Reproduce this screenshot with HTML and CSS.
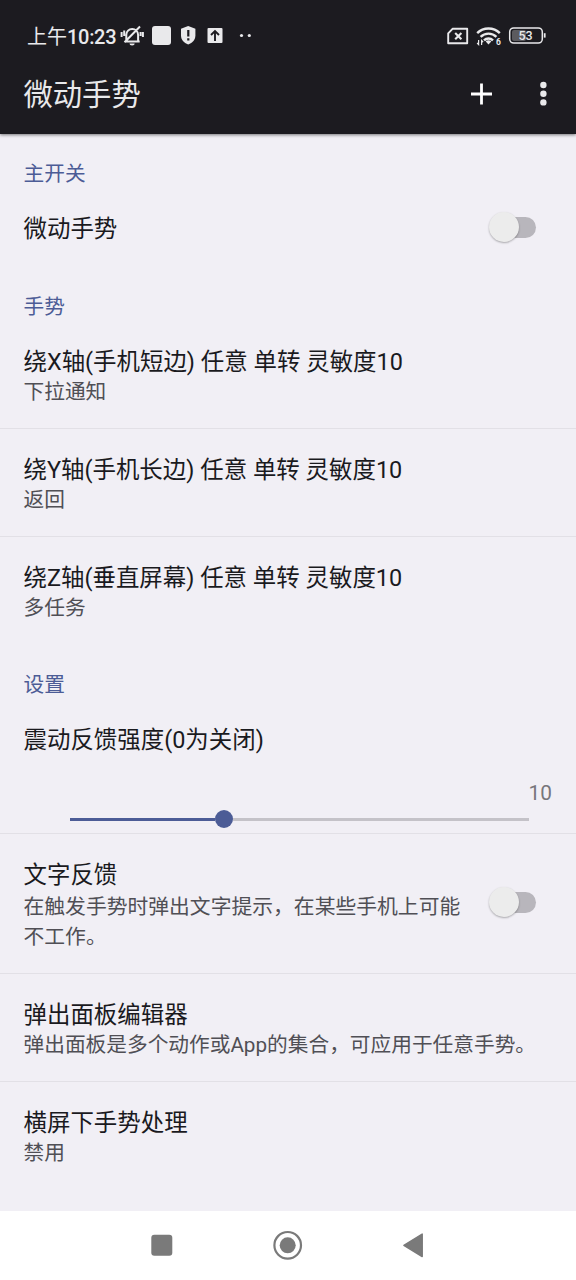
FILE: index.html
```html
<!DOCTYPE html>
<html lang="zh-CN">
<head>
<meta charset="utf-8">
<title>微动手势</title>
<link rel="stylesheet" href="styles.css">
</head>
<body>
<header class="top">
  <div class="status">
    <span class="clock">上午<span class="digits">10:23</span></span>
    <svg class="status-left" width="136" height="24" viewBox="120 24 136 24" fill="#e9e9eb">
      <g fill="none" stroke="#e9e9eb" stroke-width="2">
        <path d="M124.5 41.6h15.2M126.3 41v-6.200a5.900 5.900 0 0 1 5.900-5.900a5.900 5.900 0 0 1 5.900 5.900v6.200M124.500 42.200L140 26.500M121.600 32v5M142.900 32v5M124.200 30.500v5.500M140.600 32v4"/>
      </g>
      <path d="M129.500 43.500h5.200a2.600 2 0 0 1-5.200 0z"/>
      <rect x="152" y="26" width="19" height="19" rx="3"/>
      <path d="M188.200 26l7.200 2.800v6.500c0 4.600-2.800 7.600-7.200 9.200c-4.400-1.600-7.200-4.600-7.200-9.200v-6.500z"/>
      <path d="M187.200 30h2.200v6.500h-2.200zM187.200 38.200h2.200v2.300h-2.200z" fill="#1c1b20"/>
      <rect x="207.500" y="28" width="15" height="15" rx="1"/>
      <path d="M215 41v-9.500M211 35l4-4l4 4" fill="none" stroke="#1c1b20" stroke-width="1.900"/>
      <circle cx="241.500" cy="35.500" r="1.600"/><circle cx="249.300" cy="35.500" r="1.600"/>
    </svg>
    <svg class="status-right" width="102" height="24" viewBox="446 24 102 24" fill="none" stroke="#e9e9eb">
      <path d="M452.500 28.800h14.700v14.400h-19v-9.900z" stroke-width="1.900" stroke-linejoin="round"/>
      <path d="M455.200 33l6.200 6.200M461.400 33l-6.200 6.200" stroke-width="2.100"/>
      <path d="M477.200 33.200a16 16 0 0 1 22.600 0M480.600 36.900a11.200 11.200 0 0 1 15.800 0M484 40.400a6.400 6.400 0 0 1 9 0" stroke-width="2.400"/>
      <path d="M485.700 41.600a4 4 0 0 1 5.600 0l-2.800 2.800z" fill="#e9e9eb" stroke="none"/>
      <path d="M478.600 40v4.500l-1.500-1.500M481.600 45v-4.500l1.500 1.500" stroke-width="1.200"/>
      <text class="wifi-gen" x="496" y="45">6</text>
      <rect x="512" y="30" width="14" height="11" rx="2" fill="#5b5a5e" stroke="none"/>
      <rect x="509.700" y="27.900" width="32.600" height="15.200" rx="4" stroke-width="1.500"/>
      <path d="M544.700 33.200v4.400" stroke-width="1.800"/>
      <text class="battery" x="518.500" y="40">53</text>
    </svg>
  </div>
  <div class="appbar">
    <h1>微动手势</h1>
    <svg class="plus" width="22" height="22" viewBox="0 0 22 22"><path d="M11.500 .5v21M1 11h21" stroke="#fff" stroke-width="2.800"/></svg>
    <svg class="more" width="8" height="26" viewBox="0 0 8 26" fill="#e9e9eb"><circle cx="4.400" cy="4" r="3.200"/><circle cx="4.400" cy="12.700" r="3.200"/><circle cx="4.400" cy="21.400" r="3.200"/></svg>
  </div>
</header>
<main>
  <h2>主开关</h2>
  <div class="row main-switch"><div class="text"><p class="title">微动手势</p></div><span class="switch"></span></div>
  <h2>手势</h2>
  <div class="row line"><div class="text"><p class="title">绕X轴(手机短边) 任意 单转 灵敏度10</p><p class="summary">下拉通知</p></div></div>
  <div class="row line"><div class="text"><p class="title">绕Y轴(手机长边) 任意 单转 灵敏度10</p><p class="summary">返回</p></div></div>
  <div class="row"><div class="text"><p class="title">绕Z轴(垂直屏幕) 任意 单转 灵敏度10</p><p class="summary">多任务</p></div></div>
  <h2>设置</h2>
  <div class="row line seek"><div class="text"><p class="title">震动反馈强度(0为关闭)</p><p class="value">10</p><div class="slider"><span class="filled"></span><span class="thumb"></span><span class="rest"></span></div></div></div>
  <div class="row line tall"><div class="text"><p class="title">文字反馈</p><p class="summary">在触发手势时弹出文字提示，在某些手机上可能<br>不工作。</p></div><span class="switch"></span></div>
  <div class="row line"><div class="text"><p class="title">弹出面板编辑器</p><p class="summary">弹出面板是多个动作或App的集合，可应用于任意手势。</p></div></div>
  <div class="row"><div class="text"><p class="title">横屏下手势处理</p><p class="summary">禁用</p></div></div>
</main>
<nav class="nav">
  <svg width="22" height="22"><rect x=".3" y=".8" width="21" height="21" rx="3"/></svg>
  <svg width="30" height="30"><circle cx="14.700" cy="15.300" r="13.300" fill="none" stroke="#7a7a7a" stroke-width="2.200"/><circle cx="14.700" cy="15.300" r="8"/></svg>
  <svg width="22" height="26"><path d="M.9 13.300L19.200 2.100v22.400z" stroke="#7a7a7a" stroke-width="1.500" stroke-linejoin="round"/></svg>
</nav>
</body>
</html>
```
FILE: styles.css
```css
* { box-sizing: border-box; }
body {
  margin: 0;
  width: 576px;
  height: 1280px;
  display: flex;
  flex-direction: column;
  overflow: hidden;
  background: #f1eff5;
  color: #1a1a1e;
  font-family: Roboto, "Noto Sans CJK SC", sans-serif;
}
h1, h2, p { margin: 0; font-weight: 400; white-space: nowrap; }
svg { display: block; flex: none; }
.top {
  height: 134px;
  flex: none;
  background: #1c1b20;
  color: #e9e9eb;
  box-shadow: 0 1px 3px rgba(0, 0, 0, .5);
}
.status { display: flex; height: 60px; padding: 24px 28px 0 27px; }
.clock { width: 93px; font-size: 20px; line-height: 27px; white-space: nowrap; }
.digits { font-weight: 500; letter-spacing: -.3px; }
.status-right { margin-left: auto; }
.wifi-gen { font: 700 8.500px Roboto, sans-serif; fill: #e9e9eb; stroke: none; }
.battery { font: 500 12.500px Roboto, sans-serif; fill: #e9e9eb; stroke: none; }
.appbar { display: flex; align-items: center; height: 68px; padding: 0 29px 0 23.5px; }
h1 { flex: 1; padding-top: 2px; font-size: 29.3px; line-height: 40px; }
.more { margin-left: 47px; }
main { flex: 1; }
h2 {
  height: 54px;
  padding: 25px 24px 0 23.5px;
  color: #4c5c96;
  font-size: 20.7px;
  line-height: 30px;
}
.row { display: flex; height: 108px; padding: 26px 24px 0 23.5px; }
.line { border-bottom: 1px solid #e2e0e6; }
.main-switch { height: 79px; }
.seek { height: 135px; }
.tall { height: 140px; }
.text { flex: 1; }
.title { font-size: 23.45px; line-height: 31px; }
.summary { margin-top: -1px; color: #504f55; font-size: 20.7px; line-height: 30px; }
.tall .summary { margin-top: 1px; font-size: 20.8px; }
.value { margin-top: 22px; color: #77767b; font-size: 20.8px; line-height: 30px; text-align: right; }
.slider { display: flex; align-items: center; height: 18px; margin: 2px 23px 0 46.5px; }
.filled { width: 144.5px; height: 3px; background: #4c5c96; }
.thumb { width: 18px; height: 18px; border-radius: 50%; background: #4c5c96; }
.rest { flex: 1; height: 3px; background: #c4c2c8; }
.switch {
  position: relative;
  width: 46px;
  height: 21px;
  margin: 3px 16px 0 0;
  border-radius: 11px;
  background: linear-gradient(90deg, transparent 30%, #b8b6bc 30%);
}
.tall .switch { margin-top: 32px; }
.switch::before {
  content: "";
  position: absolute;
  top: -5px;
  left: -1px;
  width: 30px;
  height: 30px;
  border-radius: 50%;
  background: #ececec;
  box-shadow: 0 1px 2px rgba(0, 0, 0, .3);
}
.nav {
  display: grid;
  grid-template-columns: 22px 30px 22px;
  column-gap: 100px;
  justify-content: center;
  align-items: center;
  height: 69px;
  padding: 0 1px 1px 0;
  background: #fff;
  fill: #7a7a7a;
}
```
